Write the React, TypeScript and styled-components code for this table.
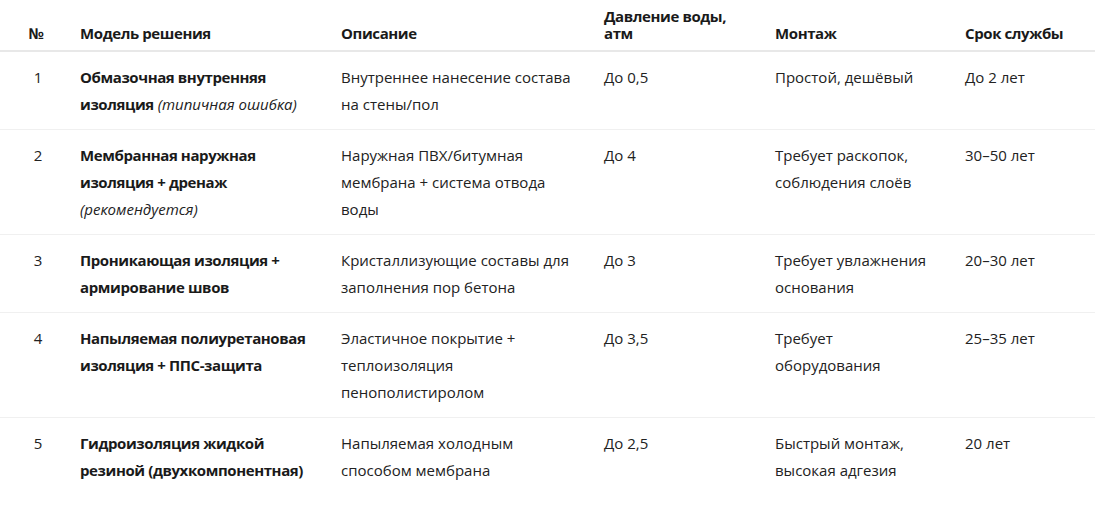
import React from 'react';
import styled, { createGlobalStyle } from 'styled-components';

const GlobalStyle = createGlobalStyle`
  html, body {
    margin: 0;
    padding: 0;
    background: #ffffff;
  }
  body {
    font-family: 'Open Sans', 'Noto Sans', 'Liberation Sans', sans-serif;
    color: #222222;
  }
`;

type Row = {
  num: number;
  model: string;
  note?: string;
  description: string;
  pressure: string;
  mounting: string;
  life: string;
};

const rows: Row[] = [
  {
    num: 1,
    model: 'Обмазочная внутренняя изоляция',
    note: '(типичная ошибка)',
    description: 'Внутреннее нанесение состава на стены/пол',
    pressure: 'До 0,5',
    mounting: 'Простой, дешёвый',
    life: 'До 2 лет',
  },
  {
    num: 2,
    model: 'Мембранная наружная изоляция + дренаж',
    note: '(рекомендуется)',
    description: 'Наружная ПВХ/битумная мембрана + система отвода воды',
    pressure: 'До 4',
    mounting: 'Требует раскопок, соблюдения слоёв',
    life: '30–50 лет',
  },
  {
    num: 3,
    model: 'Проникающая изоляция + армирование швов',
    description: 'Кристаллизующие составы для заполнения пор бетона',
    pressure: 'До 3',
    mounting: 'Требует увлажнения основания',
    life: '20–30 лет',
  },
  {
    num: 4,
    model: 'Напыляемая полиуретановая изоляция + ППС-защита',
    description: 'Эластичное покрытие + теплоизоляция пенополистиролом',
    pressure: 'До 3,5',
    mounting: 'Требует оборудования',
    life: '25–35 лет',
  },
  {
    num: 5,
    model: 'Гидроизоляция жидкой резиной (двухкомпонентная)',
    description: 'Напыляемая холодным способом мембрана',
    pressure: 'До 2,5',
    mounting: 'Быстрый монтаж, высокая адгезия',
    life: '20 лет',
  },
];

const columns = [
  { title: '№', width: 68, center: true },
  { title: 'Модель решения', width: 261 },
  { title: 'Описание', width: 263 },
  { title: 'Давление воды, атм', width: 171 },
  { title: 'Монтаж', width: 190 },
  { title: 'Срок службы', width: 142 },
];

const App = () => {
  return (
    <>
      <GlobalStyle />
      <Table>
        <colgroup>
          {columns.map((c) => (
            <col key={c.title} style={{ width: c.width }} />
          ))}
        </colgroup>
        <thead>
          <tr>
            {columns.map((c) => (
              <HeadCell key={c.title} $center={c.center}>
                {c.title}
              </HeadCell>
            ))}
          </tr>
        </thead>
        <tbody>
          {rows.map((r) => (
            <BodyRow key={r.num}>
              <Cell $center>{r.num}</Cell>
              <Cell>
                <ModelName>{r.model}</ModelName>
                {r.note && <Note> {r.note}</Note>}
              </Cell>
              <Cell>{r.description}</Cell>
              <Cell>{r.pressure}</Cell>
              <Cell>{r.mounting}</Cell>
              <Cell>{r.life}</Cell>
            </BodyRow>
          ))}
        </tbody>
      </Table>
    </>
  );
};

export default App;

const Table = styled.table`
  width: 1095px;
  table-layout: fixed;
  border-collapse: collapse;
  font-size: 15px;
`;

const HeadCell = styled.th<{ $center?: boolean }>`
  padding: ${({ $center }) => ($center ? '8px 10px 8px 14px' : '8px 12px 8px')};
  font-weight: 700;
  line-height: 17px;
  letter-spacing: -0.4px;
  color: #1a1a1a;
  text-align: ${({ $center }) => ($center ? 'center' : 'left')};
  vertical-align: bottom;
  border-bottom: 2px solid #e8e8e8;
`;

const BodyRow = styled.tr`
  border-bottom: 1px solid #f0f0f0;

  &:last-child {
    border-bottom: none;
  }
`;

const Cell = styled.td<{ $center?: boolean }>`
  padding: ${({ $center }) => ($center ? '12px 8px 11px 16px' : '12px 12px 11px')};
  line-height: 27px;
  vertical-align: top;
  text-align: ${({ $center }) => ($center ? 'center' : 'left')};
  color: #222222;
`;

const ModelName = styled.strong`
  font-weight: 700;
  letter-spacing: -0.4px;
  color: #1a1a1a;
`;

const Note = styled.em`
  font-style: italic;
  font-weight: 400;
`;
